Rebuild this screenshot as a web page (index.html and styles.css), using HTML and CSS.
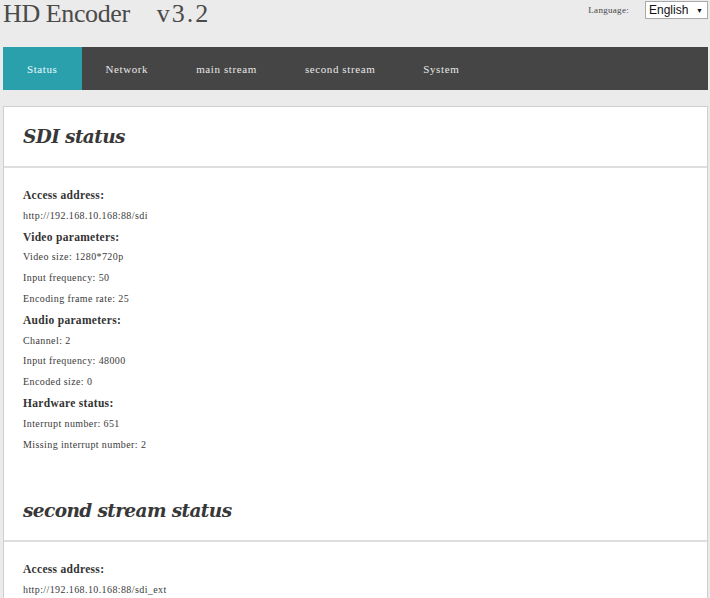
FILE: index.html
```html
<!DOCTYPE html>
<html lang="en">
<head>
    <meta charset="UTF-8">
    <meta name="viewport" content="width=device-width, initial-scale=1.0">
    <title>HD Encoder</title>
    <link rel="stylesheet" href="styles.css">
</head>
<body>
    <div class="header">
        <h1 class="title">HD Encoder<span class="version">v3.2</span></h1>
        <div class="lang">
            <span class="lang-label">Language:</span>
            <div class="lang-select">
                <span>English</span>
                <span class="arrow">&#9660;</span>
            </div>
        </div>
    </div>

    <div class="nav">
        <div class="nav-item active">Status</div>
        <div class="nav-item">Network</div>
        <div class="nav-item">main stream</div>
        <div class="nav-item">second stream</div>
        <div class="nav-item">System</div>
    </div>

    <div class="panel">
        <div class="section">
            <h2>SDI status</h2>
            <div class="section-body">
                <p class="label">Access address:</p>
                <p class="value">http://192.168.10.168:88/sdi</p>
                <p class="label">Video parameters:</p>
                <p class="value">Video size: 1280*720p</p>
                <p class="value">Input frequency: 50</p>
                <p class="value">Encoding frame rate: 25</p>
                <p class="label">Audio parameters:</p>
                <p class="value">Channel: 2</p>
                <p class="value">Input frequency: 48000</p>
                <p class="value">Encoded size: 0</p>
                <p class="label">Hardware status:</p>
                <p class="value">Interrupt number: 651</p>
                <p class="value">Missing interrupt number: 2</p>
            </div>
        </div>

        <div class="section">
            <h2>second stream status</h2>
            <div class="section-body">
                <p class="label">Access address:</p>
                <p class="value">http://192.168.10.168:88/sdi_ext</p>
            </div>
        </div>
    </div>
</body>
</html>
```

FILE: styles.css
```css
:root {
    --page-bg: #ebebeb;
    --nav-bg: #454545;
    --accent: #2ba0ad;
    --text-color: #333333;
    --serif: 'Liberation Serif', 'Times New Roman', serif;
}

* {
    box-sizing: border-box;
    margin: 0;
    padding: 0;
}

body {
    font-family: var(--serif);
    background-color: var(--page-bg);
    color: var(--text-color);
    padding: 0 2px 0 3px;
    overflow: hidden;
}

.header {
    height: 47px;
    display: flex;
    justify-content: space-between;
    align-items: flex-start;
}

.title {
    font-family: var(--serif);
    font-weight: normal;
    font-size: 26px;
    letter-spacing: -0.4px;
    line-height: 28px;
    color: #4a4a4a;
}

.title .version {
    margin-left: 27px;
    letter-spacing: 2px;
}

.lang {
    display: flex;
    align-items: center;
    padding-top: 1px;
}

.lang-label {
    font-size: 9px;
    letter-spacing: 0.3px;
    color: #444;
    margin-right: 16px;
}

.lang-select {
    width: 63px;
    height: 18px;
    display: flex;
    justify-content: space-between;
    align-items: center;
    padding: 0 4px 0 3px;
    background: #fff;
    border: 1px solid #a9a9a9;
    font-family: 'Liberation Sans', Arial, sans-serif;
    font-size: 12px;
    color: #111;
}

.lang-select .arrow {
    font-size: 7px;
}

.nav {
    display: flex;
    height: 43px;
    background-color: var(--nav-bg);
}

.nav-item {
    padding: 1px 24px 0;
    line-height: 43px;
    font-size: 11px;
    letter-spacing: 0.6px;
    color: #e8e8e8;
}

.nav-item.active {
    background-color: var(--accent);
    color: #eafcff;
}

.panel {
    margin-top: 16px;
    background: #fff;
    border: 1px solid #cfcfcf;
}

.section h2 {
    font-family: 'DejaVu Serif', Georgia, serif;
    font-style: italic;
    font-weight: bold;
    font-size: 18.5px;
    letter-spacing: -0.6px;
    line-height: 27px;
    padding: 16px 19px;
    border-bottom: 2px solid #dedede;
    color: #383838;
}

.section-body {
    padding: 17px 19px 26px;
}

.section-body p {
    line-height: 20.8px;
}

.label {
    font-weight: bold;
    font-size: 11.5px;
    letter-spacing: 0.3px;
}

.value {
    font-size: 10px;
    letter-spacing: 0.4px;
    color: #3a3a3a;
}
```
